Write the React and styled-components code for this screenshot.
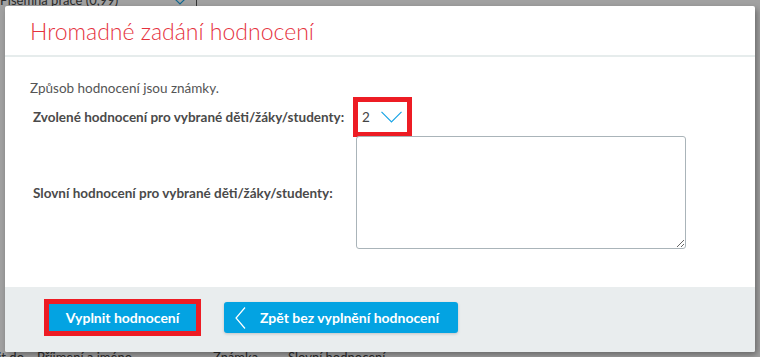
import React from "react";
import styled, { createGlobalStyle } from "styled-components";

const Global = createGlobalStyle`
  html, body { margin: 0; padding: 0; }
  body { width: 760px; height: 357px; overflow: hidden; font-family: Lato, "Open Sans", sans-serif; }
  * { box-sizing: border-box; }
`;

const Page = styled.div`
  position: relative;
  width: 760px;
  height: 357px;
  overflow: hidden;
  background: #ffffff;
`;

const Behind = styled.div`
  height: 100%;
  display: flex;
  flex-direction: column;
  justify-content: space-between;
  color: #444;
  font-size: 13px;
`;

const BehindTop = styled.div`
  display: flex;
  align-items: center;
  height: 20px;
  margin-top: -10px;
`;

const BehindTitle = styled.span`
  width: 170px;
  white-space: nowrap;
`;

const BehindSep = styled.span`
  width: 1px;
  height: 20px;
  background: #555;
  margin: 0 6px;
`;

const BehindBottom = styled.div`
  display: flex;
  align-items: flex-start;
  height: 8px;
  white-space: nowrap;
  font-size: 13px;
  line-height: 16px;
`;

const Col = styled.span`
  width: ${(p) => p.$w}px;
  flex: none;
  display: flex;
  justify-content: ${(p) => (p.$right ? "flex-end" : "flex-start")};
  overflow: hidden;
`;

const Overlay = styled.div`
  position: absolute;
  inset: 0;
  background: rgba(0, 0, 0, 0.37);
`;

const Modal = styled.div`
  position: absolute;
  left: 5px;
  top: 6px;
  width: 750px;
  height: 346px;
  background: #fff;
  display: flex;
  flex-direction: column;
  box-shadow: 2px 3px 6px rgba(0, 0, 0, 0.35);
  border-radius: 2px;
  overflow: hidden;
`;

const Header = styled.div`
  height: 51px;
  flex: none;
  display: flex;
  align-items: center;
  padding-left: 25px;
  border-bottom: 2px solid #e6ecec;
`;

const Title = styled.h1`
  margin: 0;
  font-family: Lato, "Open Sans", sans-serif;
  font-weight: 300;
  font-size: 23px;
  color: #e5323d;
`;

const Body = styled.div`
  padding: 22px 25px 0 25px;
  color: #4a4a4a;
  font-size: 13.5px;
`;

const Note = styled.p`
  margin: 0 0 3px 0;
  line-height: 18px;
  color: #555;
`;

const FormRow = styled.div`
  display: flex;
  align-items: center;
  margin-bottom: ${(p) => p.$mb || 0}px;
`;

const Label = styled.label`
  width: 326px;
  flex: none;
  padding-left: 3px;
  font-weight: 700;
  color: #4a4a4a;
  font-size: 13.5px;
`;

const Highlight = styled.div`
  outline: 5px solid #ed1c24;
  outline-offset: -2px;
`;

const Select = styled.div`
  width: 53px;
  height: 34px;
  display: flex;
  align-items: center;
  justify-content: space-between;
  padding: 0 7px 0 6px;
  font-size: 13.5px;
  color: #444;
  background: #fff;
`;

const TextArea = styled.textarea`
  width: 330px;
  height: 113px;
  border: 1px solid #aab4b9;
  border-radius: 3px;
  margin: 0;
  display: block;
  font-family: inherit;
`;

const Footer = styled.div`
  margin-top: auto;
  height: 65px;
  background: #e9edee;
  display: flex;
  align-items: flex-start;
  padding: 15px 0 0 42px;
  gap: 26px;
`;

const Button = styled.button`
  height: 31px;
  width: ${(p) => p.$w}px;
  border: none;
  border-radius: 3px;
  background: #03a3e2;
  color: #fff;
  font-family: Lato, "Open Sans", sans-serif;
  font-weight: 700;
  font-size: 14px;
  display: flex;
  align-items: center;
  justify-content: ${(p) => (p.$back ? "flex-start" : "center")};
  padding: ${(p) => (p.$back ? "0 0 0 11px" : "0")};
  gap: 14px;
  box-shadow: 0 1px 3px rgba(0, 0, 0, 0.18);
  cursor: pointer;
`;

const Chevron = () => (
  <svg width="21" height="12" viewBox="0 0 21 12">
    <path d="M0.5 0.8 L10.5 11 L20.5 0.8" fill="none" stroke="#1aa5e6" strokeWidth="1.2" />
  </svg>
);

const BackChevron = () => (
  <svg width="11" height="22" viewBox="0 0 11 22">
    <path d="M10 0.5 L1 11 L10 21.5" fill="none" stroke="#fff" strokeWidth="1.2" />
  </svg>
);

const SmallChevron = () => (
  <svg width="20" height="10" viewBox="0 0 20 10">
    <path d="M1 0 L10 9 L19 0" fill="none" stroke="#1aa5e6" strokeWidth="1.2" />
  </svg>
);

export default function App() {
  return (
    <Page>
      <Global />
      <Behind>
        <BehindTop>
          <BehindTitle>Písemná práce (0,99)</BehindTitle>
          <SmallChevron />
          <BehindSep />
          <span>*</span>
        </BehindTop>
        <BehindBottom>
          <Col $w={24} $right>Splnit do</Col>
          <Col $w={13} />
          <Col $w={176}>Příjmení a jméno</Col>
          <Col $w={75}>Známka</Col>
          <Col $w={120}>Slovní hodnocení</Col>
        </BehindBottom>
      </Behind>
      <Overlay />
      <Modal role="dialog">
        <Header>
          <Title>Hromadné zadání hodnocení</Title>
        </Header>
        <Body>
          <Note>Způsob hodnocení jsou známky.</Note>
          <FormRow $mb={2}>
            <Label>Zvolené hodnocení pro vybrané děti/žáky/studenty:</Label>
            <Highlight>
              <Select>
                <span>2</span>
                <Chevron />
              </Select>
            </Highlight>
          </FormRow>
          <FormRow>
            <Label>Slovní hodnocení pro vybrané děti/žáky/studenty:</Label>
            <TextArea />
          </FormRow>
        </Body>
        <Footer>
          <Highlight>
            <Button $w={151}>Vyplnit hodnocení</Button>
          </Highlight>
          <Button $w={234} $back>
            <BackChevron />
            Zpět bez vyplnění hodnocení
          </Button>
        </Footer>
      </Modal>
    </Page>
  );
}
